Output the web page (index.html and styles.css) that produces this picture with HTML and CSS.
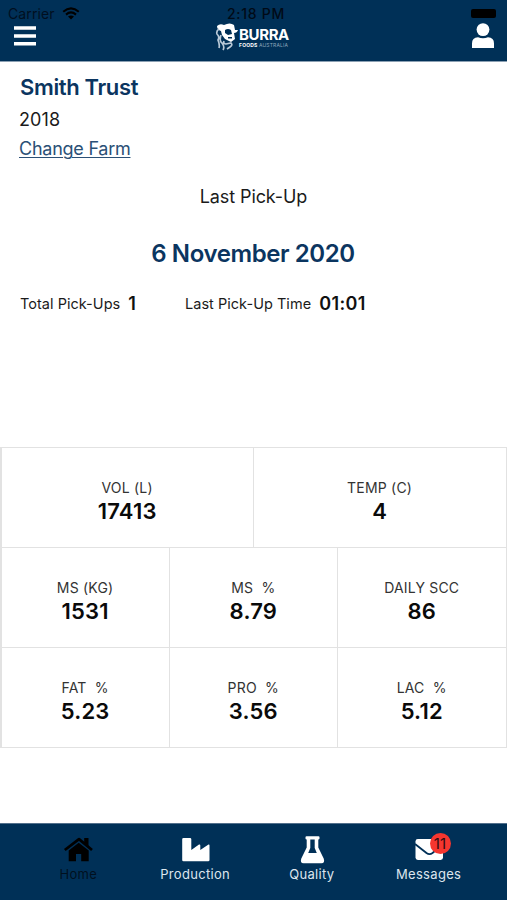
FILE: index.html
```html
<!DOCTYPE html>
<html lang="en">
<head>
<meta charset="utf-8">
<title>Burra Foods</title>
<link rel="stylesheet" href="styles.css">
</head>
<body>
<div class="app">
  <header class="header">
    <div class="status">
      <span class="carrier">Carrier <svg class="wifi" width="18" height="13" viewBox="0 0 18 13"><path d="M1.2 4.7Q9-2 16.8 4.7M4 7.6Q9 3.3 14 7.6" fill="none" stroke="#000" stroke-width="2.1"/><path d="M6 9.6Q9 7.2 12 9.6L9 12.6Z"/></svg></span>
      <span class="clock">2:18 PM</span>
      <span class="battery-side"><i class="battery"></i></span>
    </div>
    <div class="bar">
      <svg class="menu" width="22" height="20" viewBox="0 0 22 20"><path d="M0 2h22M0 10h22M0 17.7h22" stroke="#fff" stroke-width="3.6"/></svg>
      <div class="logo">
        <svg width="24" height="28" viewBox="0 0 24 28"><path d="M2 3Q5 0 9 2Q15-1 19 2L20 7H23Q22 10 19 10L20 16L16 19L10 16L7 12L6 8Q2 7 2 3Z" fill="#fff"/><path d="M10 7Q13 5 16 7L17 11L13 12L10 10ZM13 14H17V15.5H13Z" fill="#003057"/><path d="M4 6Q1 8 2 11Q5 14 3 17Q5 22 4 25M6 12Q4 18 7 20Q10 24 8 27M9 18Q8 21 11 21L16 20Q18 22 15 24L12 26" fill="none" stroke="#b9c9d7" stroke-width="1.7"/></svg>
        <div class="brand"><b>BURRA</b><small><strong>FOODS</strong> AUSTRALIA</small></div>
      </div>
      <svg class="person" width="22" height="26" viewBox="0 0 22 26"><circle cx="11" cy="6.6" r="6.4" fill="#fff"/><path d="M0 25V20.5Q0 14.5 6 14.3Q11 16 16 14.3Q22 14.5 22 20.5V25Z" fill="#fff"/></svg>
    </div>
  </header>
  <main class="main">
    <h1 class="farm">Smith Trust</h1>
    <div class="year">2018</div>
    <div class="change"><a class="link">Change Farm</a></div>
    <div class="last">Last Pick-Up</div>
    <h2 class="date">6 November 2020</h2>
    <div class="facts">
      <span class="fact total"><span class="k">Total Pick-Ups</span><b>1</b></span>
      <span class="fact"><span class="k">Last Pick-Up Time</span><b>01:01</b></span>
    </div>
    <section class="table">
      <div class="row">
        <div class="cell"><span>VOL (L)</span><b>17413</b></div>
        <div class="cell"><span>TEMP (C)</span><b>4</b></div>
      </div>
      <div class="row">
        <div class="cell"><span>MS (KG)</span><b>1531</b></div>
        <div class="cell"><span>MS&nbsp; %</span><b>8.79</b></div>
        <div class="cell"><span>DAILY SCC</span><b>86</b></div>
      </div>
      <div class="row">
        <div class="cell"><span>FAT&nbsp; %</span><b>5.23</b></div>
        <div class="cell"><span>PRO&nbsp; %</span><b>3.56</b></div>
        <div class="cell"><span>LAC&nbsp; %</span><b>5.12</b></div>
      </div>
    </section>
  </main>
  <nav class="nav">
    <div class="tab active">
      <svg width="30" height="28" viewBox="0 0 30 28"><path d="M1.8 14L16 3.2L29 14" fill="none" stroke="#000" stroke-width="2.8" stroke-linejoin="round"/><path d="M21.2 2H25.5V10L21.2 7ZM5.7 14.5L15.7 6.7L25.7 14.5V25.2H18.2V18H13V25.2H5.7Z"/></svg>
      <span>Home</span>
    </div>
    <div class="tab">
      <svg width="30" height="28" viewBox="-1 0 30 28"><path d="M2.5 2H9Q10.3 2 10.3 3.3V14L18 8.5Q19.3 8 19.3 9.5V14L27.5 8.5Q28.5 8 28.5 9.5V24Q28.5 25.3 27.2 25.3H2.5Q1.2 25.3 1.2 24V3.3Q1.2 2 2.5 2Z" fill="#fff"/></svg>
      <span>Production</span>
    </div>
    <div class="tab">
      <svg width="30" height="28" viewBox="-.5 0 30 28"><path fill-rule="evenodd" d="M9 .3H21Q22 .3 22 1.3V2.5Q22 3.5 20.8 3.5V11.5L26.2 22.5Q27.7 27 24 27.3H6Q2.3 27 3.8 22.5L9.2 11.5V3.5Q8 3.5 8 2.5V1.3Q8 .3 9 .3ZM12.8 3.5V12L10.7 17H19.3L17.2 12V3.5Z" fill="#fff"/></svg>
      <span>Quality</span>
    </div>
    <div class="tab">
      <div class="mail">
        <svg width="30" height="28" viewBox="0 0 30 28"><rect x="1.5" y="3" width="27.5" height="21" rx="2.4" fill="#fff"/><path d="M1 8L12.5 17Q15.5 19.2 18.5 17L29.5 8" fill="none" stroke="#003057" stroke-width="1.8"/></svg>
        <em class="badge">11</em>
      </div>
      <span>Messages</span>
    </div>
  </nav>
</div>
</body>
</html>
```
FILE: styles.css
```css
* { box-sizing: border-box; }
body { margin: 0; background: #fff; font-family: Inter, "Liberation Sans", sans-serif; color: #1b1b1b; }
h1, h2 { margin: 0; font-weight: 600; color: #0b3560; }
svg { display: block; flex: none; }
.app { width: 507px; height: 900px; display: flex; flex-direction: column; overflow: hidden; }

.header { height: 62px; flex: none; background: #003057; border-bottom: 1px solid #8ba0b3; }
.status { height: 22px; padding: 6px 11px 0 8px; display: grid; grid-template-columns: 1fr auto 1fr; align-items: center; font-size: 14px; line-height: 16px; color: #000f1f; }
.carrier { display: flex; align-items: center; gap: 7px; letter-spacing: 0.1px; }
.wifi { margin-top: -1px; }
.clock { color: #000a16; font-weight: 500; letter-spacing: 0.7px; padding-left: 6px; margin-right: -2px; }
.battery-side { display: flex; justify-content: flex-end; }
.battery { width: 25px; height: 9px; border-radius: 2px; background: #000; margin-top: -2px; }
.bar { height: 30px; padding: 0 14px; display: grid; grid-template-columns: 1fr auto 1fr; align-items: center; }
.menu { margin-top: -3px; }
.logo { display: flex; align-items: center; height: 30px; margin-left: -3px; }
.brand { display: flex; flex-direction: column; color: #fff; padding-top: 3px; }
.brand b { font-size: 15px; line-height: 18px; font-weight: 700; letter-spacing: -0.4px; margin: -3px 0 -3px 0; }
.brand small { font-size: 5px; line-height: 6px; letter-spacing: 0.15px; color: #8ba5bb; margin: 1px 0 0 0; }
.brand strong { color: #fff; }
.person { justify-self: end; margin: -3px -1px 0 0; }

.main { flex: 1; padding-top: 10px; }
.farm { padding-left: 20px; font-size: 22px; line-height: 30px; letter-spacing: -0.36px; }
.year { padding: 2px 0 0 19px; font-size: 18px; line-height: 31px; letter-spacing: 0.1px; }
.change { padding-left: 19px; font-size: 18px; line-height: 28px; letter-spacing: -0.25px; }
.link { color: #2b5076; text-decoration: underline; text-underline-offset: 2px; text-decoration-thickness: 1px; }
.last { margin-top: 20px; text-align: center; font-size: 18px; line-height: 28px; letter-spacing: -0.1px; }
.date { margin-top: 27px; padding-right: 1px; text-align: center; font-size: 24px; line-height: 32px; letter-spacing: -0.4px; }
.facts { margin-top: 19px; padding-left: 20px; display: flex; height: 30px; line-height: 30px; }
.fact { display: flex; gap: 8px; font-size: 14.5px; }
.k { letter-spacing: 0.03px; }
.fact b { font-size: 18px; font-weight: 600; color: #111; letter-spacing: 0.4px; }
.total { width: 165px; }
.table { margin-top: 128px; border: 1px solid #e2e2e2; border-width: 1px 1px 0 2px; }
.row { display: flex; height: 100px; border-bottom: 1px solid #e2e2e2; }
.cell { flex: 1 1 100%; display: flex; flex-direction: column; align-items: center; padding: 30px 1px 0 0; font-size: 14px; line-height: 20px; letter-spacing: 0.2px; color: #333; }
.cell:not(:last-child) { border-right: 1px solid #e2e2e2; }
.cell b { font-size: 22px; line-height: 26px; font-weight: 600; color: #0a0a0a; }

.nav { height: 77px; flex: none; background: #003057; border-top: 1px solid #526f8b; padding: 12px 20px 0; display: flex; }
.tab { flex: 1; display: flex; flex-direction: column; align-items: center; color: #dce5ee; font-size: 13px; line-height: 20px; letter-spacing: 0.3px; }
.tab.active { color: #00101f; }
.mail { position: relative; }
.badge { position: absolute; left: 16px; top: -3px; width: 21px; height: 21px; border-radius: 50%; background: #f5362f; color: #300b12; font-style: normal; font-size: 15px; line-height: 21px; text-align: center; }
```
